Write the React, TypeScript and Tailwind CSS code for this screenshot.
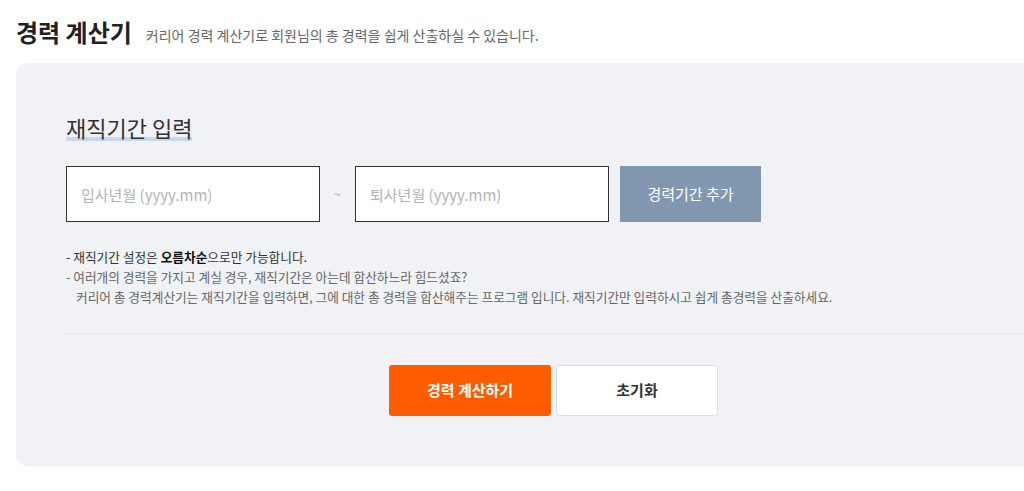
const font = "font-['Noto_Sans_CJK_KR','Noto_Sans',sans-serif]";

const App = () => {
	return (
		<div className={`h-[491px] w-[1024px] overflow-hidden bg-white ${font}`}>
			<div className="flex items-end gap-[14px] pl-4 pt-[15px]">
				<h1 className="text-[24px] font-bold leading-[33px] text-[#222]">경력 계산기</h1>
				<p className="pb-[3px] text-[14px] leading-[20px] text-[#666]">
					커리어 경력 계산기로 회원님의 총 경력을 쉽게 산출하실 수 있습니다.
				</p>
			</div>
			<div className="ml-4 mt-[15px] h-[403px] w-[1040px] rounded-[12px] bg-[#f0f2f5] pl-[50px] pt-[50px]">
				<h2 className="inline-block bg-[linear-gradient(transparent_86%,#c6d8f1_86%)] text-[22px] font-normal leading-[28px] text-[#333]">
					재직기간 입력
				</h2>
				<div className="mt-[24px] flex items-center">
					<input
						className="h-[56px] w-[254px] border border-[#333] bg-white px-[14px] text-[15px] text-[#333] placeholder:text-[#b3b3b3] outline-none"
						placeholder="입사년월 (yyyy.mm)"
					/>
					<span className="w-[35px] text-center text-[12px] text-[#aaa]">~</span>
					<input
						className="h-[56px] w-[254px] border border-[#333] bg-white px-[14px] text-[15px] text-[#333] placeholder:text-[#b3b3b3] outline-none"
						placeholder="퇴사년월 (yyyy.mm)"
					/>
					<button className="ml-[11px] h-[56px] w-[141px] bg-[#8298b0] text-[15px] text-white">
						경력기간 추가
					</button>
				</div>
				<div className="mt-[25px] text-[12.7px] leading-[20px] text-[#666]">
					<p className="text-[#333]">
						- 재직기간 설정은 <b className="font-bold text-[#111]">오름차순</b>으로만 가능합니다.
					</p>
					<p>- 여러개의 경력을 가지고 계실 경우, 재직기간은 아는데 합산하느라 힘드셨죠?</p>
					<p className="pl-[10px]">
						커리어 총 경력계산기는 재직기간을 입력하면, 그에 대한 총 경력을 합산해주는 프로그램 입니다. 재직기간만 입력하시고 쉽게 총경력을 산출하세요.
					</p>
				</div>
				<div className="mt-[26px] h-px w-full bg-[#e2e5ea]" />
				<div className="mt-[31px] flex w-[975px] justify-center gap-[5px]">
					<button className="h-[51px] w-[162px] rounded-[3px] bg-[#ff5c00] text-[15px] font-bold text-white">
						경력 계산하기
					</button>
					<button className="h-[51px] w-[162px] rounded-[3px] border border-[#dddddd] bg-white text-[15px] font-bold text-[#333]">
						초기화
					</button>
				</div>
			</div>
		</div>
	);
};

export default App;
